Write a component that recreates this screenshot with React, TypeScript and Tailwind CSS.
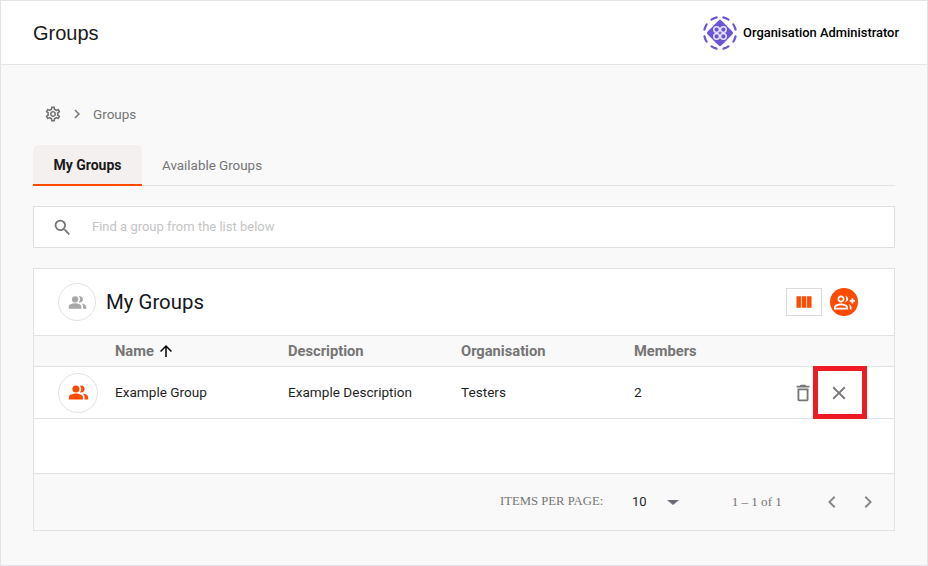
import {
  MdOutlineSettings,
  MdChevronRight,
  MdChevronLeft,
  MdSearch,
  MdArrowUpward,
  MdDeleteOutline,
  MdClose,
  MdViewColumn,
  MdPeopleAlt,
  MdOutlineGroupAdd,
} from "react-icons/md";

function Logo() {
  const arcs = [
    "M9.500 5.200 A14 14 0 0 1 14 3.300",
    "M20 3.300 A14 14 0 0 1 24.500 5.200",
    "M28.800 9.500 A14 14 0 0 1 30.700 14",
    "M30.700 20 A14 14 0 0 1 28.800 24.500",
    "M24.500 28.800 A14 14 0 0 1 20 30.700",
    "M14 30.700 A14 14 0 0 1 9.500 28.800",
    "M5.200 24.500 A14 14 0 0 1 3.300 20",
    "M3.300 14 A14 14 0 0 1 5.200 9.500",
  ];
  return (
    <svg viewBox="2 2 30 30" className="w-[34px] h-[34px]" fill="none">
      <g stroke="#6d55d8" strokeWidth="2" strokeLinecap="round">
        {arcs.map((d) => (
          <path key={d} d={d} />
        ))}
      </g>
      <path d="M17 7.500 L26.500 17 L17 26.500 L7.500 17 Z" fill="#6d55d8" stroke="#6d55d8" strokeWidth="4" strokeLinejoin="round" />
      <g stroke="#e9e4fb" strokeWidth="1.300" fill="#6d55d8">
        <circle cx="14" cy="14" r="2.500" />
        <circle cx="20" cy="14" r="2.500" />
        <circle cx="14" cy="20" r="2.500" />
        <circle cx="20" cy="20" r="2.500" />
      </g>
    </svg>
  );
}

export default function App() {
  return (
    <div className="relative w-[928px] h-[566px] overflow-hidden border border-[#e3e3e8] bg-[#f9f9f9] font-['Roboto','Liberation_Sans',sans-serif] flex flex-col">
      <header className="h-[64px] shrink-0 bg-white border-b border-[#e3e3e8] flex items-center justify-between pl-[32px] pr-[28px]">
        <h1 className="text-[20px] text-[#1a1a1a] font-['Liberation_Sans',sans-serif]">Groups</h1>
        <div className="flex items-center gap-[6px]">
          <Logo />
          <span className="text-[12.9px] font-medium text-black">Organisation Administrator</span>
        </div>
      </header>

      <main className="flex-1 px-[32px] flex flex-col">
        <nav className="mt-[40px] h-[18px] flex items-center text-[13.500px] text-[#757575] pl-[11px]">
          <MdOutlineSettings className="w-[18px] h-[18px] text-[#6f6f6f]" />
          <MdChevronRight className="w-[18px] h-[18px] ml-[6px] text-[#757575]" />
          <span className="ml-[7px]">Groups</span>
        </nav>

        <div className="mt-[22px] flex h-[41px] border-b border-[#e3e3e3]">
          <div className="w-[109px] h-[41px] pt-[1px] bg-[#f4f0ef] rounded-t-[6px] border-b-2 border-[#ff4b00] flex items-center justify-center text-[14px] font-bold text-[#1a1a1a]">
            My Groups
          </div>
          <div className="ml-[20px] pt-[2px] flex items-center text-[13.400px] text-[#757575] h-[40px]">Available Groups</div>
        </div>

        <div className="mt-[20px] h-[42px] bg-white border border-[#e0e0e0] flex items-center pl-[18px]">
          <MdSearch className="w-[21px] h-[21px] text-[#757575]" />
          <span className="ml-[19px] text-[13px] text-[#c4c4c4]">Find a group from the list below</span>
        </div>

        <section className="mt-[20px] h-[263px] bg-white border border-[#e3e3e3] flex flex-col">
          <div className="h-[67px] shrink-0 flex items-center pl-[24px] pr-[36px] border-b border-[#e3e3e3]">
            <div className="w-[38px] h-[38px] rounded-full border border-[#e3e3e3] flex items-center justify-center">
              <MdPeopleAlt className="w-[19px] h-[19px] text-[#a8a8a8]" />
            </div>
            <h2 className="ml-[10px] text-[20.400px] text-[#16161d]">My Groups</h2>
            <div className="ml-auto flex items-center gap-[8px]">
              <div className="w-[36px] h-[28px] border border-[#dcdcdc] flex items-center justify-center">
                <MdViewColumn className="w-[20px] h-[20px] text-[#ff4b00]" />
              </div>
              <div className="w-[28px] h-[28px] rounded-full bg-[#ff4b00] flex items-center justify-center">
                <MdOutlineGroupAdd className="w-[21px] h-[21px] text-white" />
              </div>
            </div>
          </div>

          <div className="h-[31px] shrink-0 bg-[#f9f9f9] border-b border-[#e3e3e3] flex items-center text-[14.700px] font-bold text-[#757575]">
            <div className="w-[81px]" />
            <div className="w-[173px] flex items-center gap-[3px]">
              Name <MdArrowUpward className="w-[18px] h-[18px] text-black" />
            </div>
            <div className="w-[173px]">Description</div>
            <div className="w-[173px]">Organisation</div>
            <div className="w-[173px]">Members</div>
          </div>

          <div className="h-[52px] shrink-0 border-b border-[#e3e3e3] flex items-center text-[13.600px] text-[#1f1f1f]">
            <div className="w-[81px] pl-[24px]">
              <div className="w-[40px] h-[40px] rounded-full border border-[#e3e3e3] flex items-center justify-center">
                <MdPeopleAlt className="w-[21px] h-[21px] text-[#ff4b00]" />
              </div>
            </div>
            <div className="w-[173px]">Example Group</div>
            <div className="w-[173px]">Example Description</div>
            <div className="w-[173px]">Testers</div>
            <div className="w-[100px]">2</div>
            <div className="ml-auto flex items-center pr-[44px] gap-[14px]">
              <MdDeleteOutline className="w-[22px] h-[22px] text-[#757575]" />
              <MdClose className="w-[22px] h-[22px] text-[#757575]" />
            </div>
          </div>

          <div className="flex-1" />

          <div className="h-[57px] shrink-0 bg-[#f9f9f9] border-t border-[#e3e3e3] flex items-center font-['Liberation_Serif',serif] text-[12.700px] text-[#757575]">
            <span className="ml-[466px] w-[104px] whitespace-nowrap">ITEMS PER PAGE:</span>
            <span className="ml-[28px] font-['Roboto',sans-serif] text-[13px] text-[#1f1f1f]">10</span>
            <span className="ml-[20px] w-0 h-0 border-x-[6px] border-x-transparent border-t-[5px] border-t-[#6b6b78]" />
            <span className="ml-[53px] text-[13.100px]">1 – 1 of 1</span>
            <MdChevronLeft className="ml-[38px] w-[24px] h-[24px] text-[#888888]" />
            <MdChevronRight className="ml-[12px] w-[24px] h-[24px] text-[#888888]" />
          </div>
        </section>
      </main>

      <div className="absolute left-[812px] top-[365px] w-[54px] h-[53px] border-[5px] border-[#ed1c24]" />
    </div>
  );
}
